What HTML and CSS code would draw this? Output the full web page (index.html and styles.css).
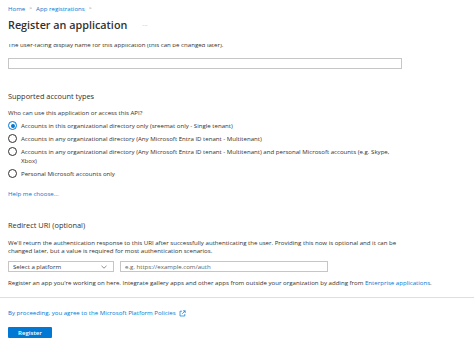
FILE: index.html
```html
<!DOCTYPE html>
<html>
<head>
<meta charset="utf-8">
<link rel="stylesheet" href="styles.css">
</head>
<body>
<div class="header">
  <div class="crumbs">
    <a class="crumb">Home</a><span class="sep">&gt;</span><a class="crumb">App registrations</a><span class="sep">&gt;</span>
  </div>
  <div class="title-row">
    <h1 class="title">Register an application</h1>
    <span class="more">···</span>
  </div>
</div>
<div class="scroll">
  <p class="desc clipped">The user-facing display name for this application (this can be changed later).</p>
  <div class="textbox wide"></div>

  <h2 class="section">Supported account types</h2>
  <p class="desc q">Who can use this application or access this API?</p>
  <div class="radios">
    <label class="radio on"><span class="dot"></span><span class="rtext">Accounts in this organizational directory only (sreemat only - Single tenant)</span></label>
    <label class="radio"><span class="dot"></span><span class="rtext">Accounts in any organizational directory (Any Microsoft Entra ID tenant - Multitenant)</span></label>
    <label class="radio"><span class="dot"></span><span class="rtext">Accounts in any organizational directory (Any Microsoft Entra ID tenant - Multitenant) and personal Microsoft accounts (e.g. Skype, Xbox)</span></label>
    <label class="radio"><span class="dot"></span><span class="rtext">Personal Microsoft accounts only</span></label>
  </div>
  <a class="link help">Help me choose...</a>

  <h2 class="section redirect">Redirect URI (optional)</h2>
  <p class="desc para">We'll return the authentication response to this URI after successfully authenticating the user. Providing this now is optional and it can be changed later, but a value is required for most authentication scenarios.</p>
  <div class="uri-row">
    <div class="select">
      <span>Select a platform</span>
      <svg class="chev" width="6" height="4" viewBox="0 0 6 4"><path d="M0.5 0.8 L3 3.2 L5.5 0.8" fill="none" stroke="#605e5c" stroke-width="0.7"/></svg>
    </div>
    <div class="textbox uri"><span class="ph">e.g. https://example.com/auth</span></div>
  </div>
  <p class="desc note">Register an app you're working on here. Integrate gallery apps and other apps from outside your organization by adding from <a class="link">Enterprise applications</a>.</p>
</div>
<div class="footer">
  <a class="link policy">By proceeding, you agree to the Microsoft Platform Policies
    <svg class="ext" width="7" height="7" viewBox="0 0 7 7"><path d="M3 1.2 H1 V6 H5.8 V4" fill="none" stroke="#0078d4" stroke-width="0.7"/><path d="M4 0.8 H6.2 V3 M6.2 0.8 L3.2 3.8" fill="none" stroke="#0078d4" stroke-width="0.7"/></svg>
  </a>
  <button class="btn">Register</button>
</div>
</body>
</html>
```

FILE: styles.css
```css
* { box-sizing: border-box; }
html, body { margin: 0; padding: 0; background: #ffffff; }
body {
  width: 474px;
  height: 346px;
  overflow: hidden;
  font-family: "Open Sans", "Noto Sans", sans-serif;
  color: #323130;
  font-size: 6.1px;
}
p, h1, h2 { margin: 0; font-weight: normal; }
a { text-decoration: none; }

.header { padding: 4px 8px 0 8px; height: 44px; }
.crumbs { display: flex; align-items: center; line-height: 9px; font-size: 6.1px; }
.crumb { color: #0078d4; }
.sep { color: #8a8886; margin: 0 4px; font-size: 5px; }
.title-row { display: flex; align-items: center; margin-top: 4px; height: 16px; }
.title { font-size: 10.8px; font-weight: 600; line-height: 16px; color: #323130; }
.more { margin-left: 15px; font-size: 6px; color: #8a8886; letter-spacing: 0.3px; }

.scroll { height: 253px; overflow: hidden; padding: 0 8px; }
.desc { font-size: 6.1px; line-height: 8px; color: #323130; }
.clipped { margin-top: -3px; }
.textbox { height: 11px; border: 1px solid #c8c6c4; background: #fff; }
.wide { width: 394px; margin-top: 9px; }

.section { font-size: 7.4px; line-height: 10px; color: #323130; margin-top: 22px; }
.q { margin-top: 8px; }
.radios { display: flex; flex-direction: column; gap: 4px; margin-top: 4px; width: 394px; }
.radio { display: flex; align-items: flex-start; line-height: 9px; }
.dot { flex: none; width: 9px; height: 9px; border-radius: 50%; border: 0.8px solid #323130; margin-right: 4px; position: relative; }
.radio.on .dot { border-color: #0078d4; }
.radio.on .dot::after {
  content: ""; position: absolute; left: 1.8px; top: 1.8px; width: 3.8px; height: 3.8px; border-radius: 50%; background: #0078d4;
}
.rtext { flex: 1; }
.link { color: #0078d4; }
.help { display: block; line-height: 8px; margin-top: 12px; }
.redirect { margin-top: 22px; }
.para { margin-top: 9px; width: 394px; }
.uri-row { display: flex; gap: 6px; margin-top: 6px; }
.select { width: 106px; height: 11px; border: 1px solid #c8c6c4; display: flex; align-items: center; justify-content: space-between; padding: 0 6px 0 4px; color: #323130; line-height: 9px; }
.chev { display: block; }
.uri { width: 208px; display: flex; align-items: center; padding-left: 4px; }
.ph { color: #605e5c; line-height: 9px; }
.note { margin-top: 7px; }

.footer { border-top: 1px solid #e1dfdd; padding: 11px 8px 0 8px; }
.policy { display: flex; align-items: center; line-height: 8px; }
.ext { margin-left: 3px; }
.btn {
  display: block; margin-top: 10px; width: 44px; height: 11px; padding: 0; border: none; border-radius: 1px;
  background: #0078d4; color: #fff; font-family: inherit; font-size: 6.1px; font-weight: 600; line-height: 11px;
}
```
